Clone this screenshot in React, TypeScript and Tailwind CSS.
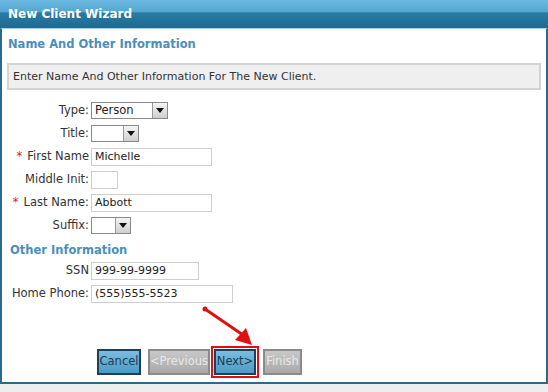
import React from 'react';

const font = "font-['DejaVu_Sans',Verdana,sans-serif]";

function Arrow() {
  return (
    <div className="flex h-full w-[15px] items-center justify-center border-l border-[#999] bg-[linear-gradient(#f4f4f4,#cfcfcf)]">
      <svg width="8" height="5" viewBox="0 0 8 5">
        <path d="M0 0h8L4 5z" fill="#111" />
      </svg>
    </div>
  );
}

function Select({ value, width }: { value: string; width: string }) {
  return (
    <div className={`flex h-[17px] items-center border border-[#8a8a8a] bg-white ${width}`}>
      <span className="flex-1 pl-[3px] text-[11.5px] text-[#222]">{value}</span>
      <Arrow />
    </div>
  );
}

function Input({ value, width }: { value: string; width: string }) {
  return (
    <div className={`flex h-[18px] items-center border border-[#cfcfcf] bg-white pl-[3px] text-[11px] text-[#222] ${width}`}>
      {value}
    </div>
  );
}

function Row({ label, req, children }: { label: string; req?: boolean; children: React.ReactNode }) {
  return (
    <div className="flex h-[23px] items-center">
      <div className="flex w-[89px] justify-end pr-[2px] text-[11.5px] text-[#333]">
        {req && <span className="mr-[5px] text-[#e02020]">*</span>}
        {label}
      </div>
      {children}
    </div>
  );
}

function Button({ label, disabled, className = '' }: { label: string; disabled?: boolean; className?: string }) {
  const cls = disabled
    ? 'border-[#8a8a8a] bg-[linear-gradient(#c8c8c8,#a9a9a9)] text-[#e8e8e8]'
    : 'border-[#1c3f5a] bg-[linear-gradient(#7cbde0,#4b9bc6)] text-[#1d3a52]';
  return (
    <div className={`flex h-[26px] items-center justify-center border-2 text-[11.5px] ${cls} ${className}`}>
      {label}
    </div>
  );
}

export default function App() {
  return (
    <div className={`relative h-[392px] w-[548px] overflow-hidden bg-[#eeeeee] ${font}`}>
      <div className="flex h-[28px] items-center bg-[linear-gradient(#6cb9e3_0%,#55a7d2_42%,#2a7ba3_46%,#1d6a90_100%)] pl-[8px] text-[12px] font-bold text-white">
        New Client Wizard
      </div>
      <div className="h-[356px] border-x-2 border-b-2 border-t border-[#2a6a8c] border-t-[#a8cdf0] bg-white">
        <div className="pl-[6px] pt-[7px] text-[11.5px] font-bold text-[#4a8fba]">Name And Other Information</div>
        <div className="mx-[5px] mt-[10px] flex h-[27px] items-center border-2 border-[#d4d4d4] bg-[#efefef] pl-[4px] text-[11px] text-[#333]">
          Enter Name And Other Information For The New Client.
        </div>
        <div className="mt-[9px] flex flex-col">
          <Row label="Type:"><Select value="Person" width="w-[77px]" /></Row>
          <Row label="Title:"><Select value="" width="w-[48px]" /></Row>
          <Row label="First Name" req><Input value="Michelle" width="w-[121px]" /></Row>
          <Row label="Middle Init:"><Input value="" width="w-[27px]" /></Row>
          <Row label="Last Name:" req><Input value="Abbott" width="w-[121px]" /></Row>
          <Row label="Suffix:"><Select value="" width="w-[40px]" /></Row>
        </div>
        <div className="pl-[8px] pt-[5px] text-[11.5px] font-bold text-[#4a8fba]">Other Information</div>
        <div className="flex flex-col">
          <Row label="SSN"><Input value="999-99-9999" width="w-[108px]" /></Row>
          <Row label="Home Phone:"><Input value="(555)555-5523" width="w-[142px]" /></Row>
        </div>
        <div className="mt-[40px] flex items-center pl-[95px]">
          <Button label="Cancel" className="w-[44px]" />
          <Button label="<Previous" disabled className="ml-[7px] w-[62px]" />
          <div className="ml-[1px] border-2 border-[#e01010] p-[1px]">
            <Button label="Next>" className="w-[42px]" />
          </div>
          <Button label="Finish" disabled className="ml-[4px] w-[39px]" />
        </div>
      </div>
      <svg className="absolute left-[200px] top-[304px]" width="65" height="45" viewBox="0 0 65 45">
        <circle cx="5" cy="5" r="2.5" fill="#e01010" />
        <line x1="5" y1="5" x2="43" y2="31" stroke="#e01010" strokeWidth="3" />
        <path d="M52 41L35 36L46 24Z" fill="#e01010" />
      </svg>
    </div>
  );
}
